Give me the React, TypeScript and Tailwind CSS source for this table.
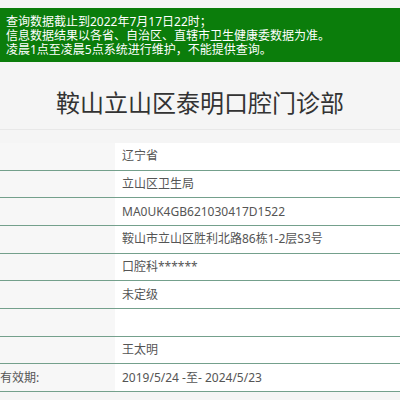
const rows = [
  { label: "", value: "辽宁省" },
  { label: "", value: "立山区卫生局" },
  { label: "", value: "MA0UK4GB621030417D1522" },
  { label: "", value: "鞍山市立山区胜利北路86栋1-2层S3号" },
  { label: "", value: "口腔科******" },
  { label: "", value: "未定级" },
  { label: "", value: "" },
  { label: "", value: "王太明" },
  { label: "有效期:", value: "2019/5/24 -至- 2024/5/23" },
]

export default function App() {
  return (
    <div
      className="flex min-h-[400px] w-[400px] flex-col overflow-hidden bg-[#f5f5f5]"
      style={{ fontFamily: '"Noto Sans", "Noto Sans CJK SC", sans-serif' }}
    >
      {/* 提示条 */}
      <div className="mt-[8px] h-[54px] bg-[#0b7d0b] px-[6px] pt-[7px] text-[12px] leading-[14px] text-white">
        <p className="h-[14px] overflow-visible whitespace-nowrap">查询数据截止到2022年7月17日22时；</p>
        <p className="h-[14px] overflow-visible whitespace-nowrap">信息数据结果以各省、自治区、直辖市卫生健康委数据为准。</p>
        <p className="h-[14px] overflow-visible whitespace-nowrap">凌晨1点至凌晨5点系统进行维护，不能提供查询。</p>
      </div>

      {/* 标题 */}
      <div className="border-b border-[#e8e8e8] pt-[24px] pb-[9px] text-center text-[24px] leading-[34px] text-[#333]">
        鞍山立山区泰明口腔门诊部
      </div>

      {/* 信息表 */}
      <div className="mt-[13px]">
        {rows.map((row, i) => (
          <div
            key={i}
            className="flex h-[27.67px] border-b border-[#74a08c] text-[12px] text-[#555]"
          >
            <div className="flex w-[115px] shrink-0 items-center bg-[#f7f7f7] whitespace-nowrap">
              {row.label}
            </div>
            <div className="flex flex-1 items-center bg-white pl-[7px] whitespace-nowrap">
              {row.value}
            </div>
          </div>
        ))}
      </div>
    </div>
  )
}
